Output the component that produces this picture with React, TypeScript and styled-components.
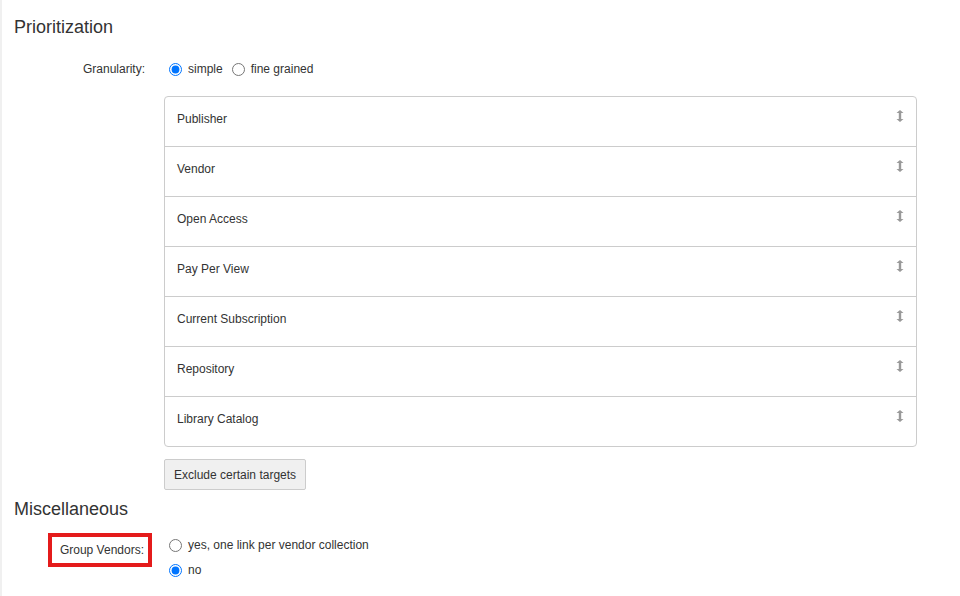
import React, { useState } from 'react';
import styled, { createGlobalStyle } from 'styled-components';

const GlobalStyle = createGlobalStyle`
  html, body {
    margin: 0;
    padding: 0;
    background: #fff;
  }
  body {
    font-family: "Liberation Sans", Arial, sans-serif;
    color: #333;
  }
`;

const Page = styled.div`
  min-height: 596px;
  border-left: 2px solid #f0f0f0;
  padding: 17px 0 0 12px;
  box-sizing: border-box;
`;

const Heading = styled.h3<{ $top?: number }>`
  margin: ${p => p.$top ?? 0}px 0 0 0;
  font-size: 18px;
  line-height: 20px;
  font-weight: normal;
  color: #333;
`;

const FormRow = styled.div<{ $top: number }>`
  display: grid;
  grid-template-columns: 131px 1fr;
  column-gap: 19px;
  align-items: start;
  margin-top: ${p => p.$top}px;
  font-size: 12px;
`;

const Label = styled.label`
  text-align: right;
  line-height: 20px;
`;

const BoxedLabel = styled.label`
  justify-self: end;
  margin-right: -7px;
  margin-top: -1px;
  border: 4px solid #e41b1b;
  padding: 5px 4px 5px 8px;
  line-height: 16px;
`;

const Options = styled.div<{ $column?: boolean }>`
  display: flex;
  flex-direction: ${p => (p.$column ? 'column' : 'row')};
  align-items: ${p => (p.$column ? 'flex-start' : 'center')};
  gap: ${p => (p.$column ? '5px' : '4px')};
  margin-top: ${p => (p.$column ? '1px' : '0')};
`;

const Option = styled.label`
  display: flex;
  align-items: center;
  line-height: 20px;
  cursor: pointer;

  input {
    margin: 0 6px 0 5px;
    width: 13px;
    height: 13px;
  }
`;

const List = styled.ul`
  margin: 17px 0 0 150px;
  padding: 0;
  list-style: none;
  width: 753px;
  border: 1px solid #ccc;
  border-radius: 4px;
  box-sizing: border-box;
`;

const Item = styled.li`
  display: flex;
  justify-content: space-between;
  align-items: flex-start;
  height: 50px;
  box-sizing: border-box;
  padding: 14px 12px 0 12px;
  font-size: 12px;
  line-height: 17px;
  border-top: 1px solid #ccc;
  cursor: move;

  &:first-child {
    height: 49px;
    border-top: none;
  }
`;

const Handle = styled.svg`
  flex-shrink: 0;
  margin-top: -1px;
`;

const Button = styled.button`
  margin: 12px 0 0 150px;
  height: 31px;
  padding: 0 9px;
  font-family: "Liberation Sans", Arial, sans-serif;
  font-size: 12px;
  color: #333;
  background: #f0f0f0;
  border: 1px solid #ccc;
  border-radius: 2px;
  cursor: pointer;
`;

const items = [
  'Publisher',
  'Vendor',
  'Open Access',
  'Pay Per View',
  'Current Subscription',
  'Repository',
  'Library Catalog',
];

const DragIcon = () => (
  <Handle width="8" height="12" viewBox="0 0 8 12">
    <path d="M4 0 L7.5 3 L5.2 3 L5.2 9 L7.5 9 L4 12 L0.5 9 L2.8 9 L2.8 3 L0.5 3 Z" fill="#999" />
  </Handle>
);

export default function App() {
  const [granularity, setGranularity] = useState('simple');
  const [group, setGroup] = useState('no');

  return (
    <Page>
      <GlobalStyle />
      <Heading>Prioritization</Heading>
      <FormRow $top={22}>
        <Label>Granularity:</Label>
        <Options>
          <Option>
            <input
              type="radio"
              name="granularity"
              checked={granularity === 'simple'}
              onChange={() => setGranularity('simple')}
            />
            simple
          </Option>
          <Option>
            <input
              type="radio"
              name="granularity"
              checked={granularity === 'fine'}
              onChange={() => setGranularity('fine')}
            />
            fine grained
          </Option>
        </Options>
      </FormRow>

      <List>
        {items.map(name => (
          <Item key={name}>
            <span>{name}</span>
            <DragIcon />
          </Item>
        ))}
      </List>

      <Button type="button">Exclude certain targets</Button>

      <Heading $top={9}>Miscellaneous</Heading>
      <FormRow $top={15}>
        <BoxedLabel>Group Vendors:</BoxedLabel>
        <Options $column>
          <Option>
            <input
              type="radio"
              name="group"
              checked={group === 'yes'}
              onChange={() => setGroup('yes')}
            />
            yes, one link per vendor collection
          </Option>
          <Option>
            <input
              type="radio"
              name="group"
              checked={group === 'no'}
              onChange={() => setGroup('no')}
            />
            no
          </Option>
        </Options>
      </FormRow>
    </Page>
  );
}
